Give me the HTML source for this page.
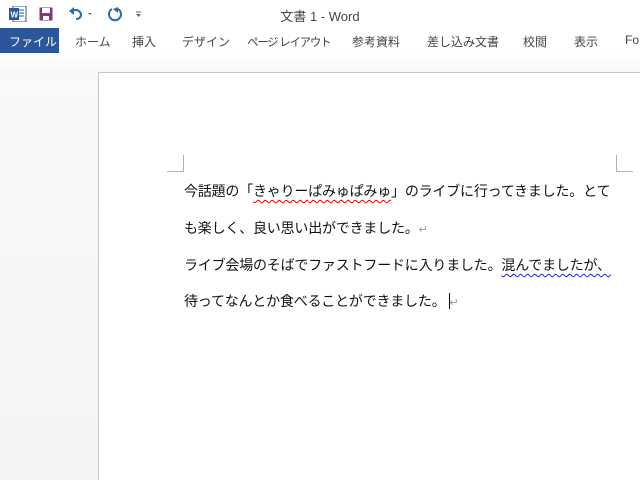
<!DOCTYPE html>
<html><head><meta charset="utf-8"><style>
*{margin:0;padding:0;box-sizing:border-box}
body{width:640px;height:480px;overflow:hidden;background:#fff;font-family:"Liberation Sans","Noto Sans CJK JP",sans-serif;position:relative}
.title{position:absolute;left:0;top:0;width:640px;height:28px;background:#fff}
.title .t{position:absolute;left:0;width:640px;top:6px;text-align:center;font-size:13px;color:#444}
.tabs{position:absolute;top:28px;left:0;width:640px;height:25px;font-size:12px;color:#444}
.tabs span{position:absolute;top:5px;white-space:nowrap}
.file{position:absolute;left:0;top:28px;width:59px;height:25px;background:#2b579a;color:#fff;font-size:12px;padding:5px 0 0 9px}
.rib{position:absolute;top:53px;left:0;width:640px;height:20px;background:linear-gradient(#fff,#f8f8f8)}
.bg{position:absolute;top:73px;left:0;width:98px;height:407px;background:linear-gradient(#f9f9f9,#f4f4f4)}
.page{position:absolute;left:98px;top:72px;width:542px;height:408px;background:#fff;border-left:1px solid #c6c6c6;border-top:1px solid #c6c6c6}
.c{position:absolute;background:#b0b0b0}
.txt{position:absolute;left:184px;font-size:14px;color:#111;letter-spacing:-0.2px;white-space:nowrap}
.r{text-decoration:underline wavy #e00;text-underline-offset:3px;text-decoration-thickness:1px}
.b{text-decoration:underline wavy #22c;text-underline-offset:3px;text-decoration-thickness:1px}
.m{color:#999;font-size:11px}
</style></head><body>
<div class="title">
<svg style="position:absolute;left:9px;top:6px" width="18" height="16"><rect x="4" y="0" width="13" height="16" fill="#fff" stroke="#2b579a"/><line x1="10" y1="4" x2="15" y2="4" stroke="#2b579a"/><line x1="10" y1="7" x2="15" y2="7" stroke="#2b579a"/><line x1="10" y1="10" x2="15" y2="10" stroke="#2b579a"/><rect x="0" y="2" width="10" height="12" fill="#2b579a"/><text x="1.5" y="11.5" font-size="8" fill="#fff" font-family="Liberation Sans" font-weight="bold">W</text></svg>
<svg style="position:absolute;left:39px;top:7px" width="14" height="14"><rect x="0.5" y="0.5" width="13" height="13" fill="#80397b"/><rect x="3" y="1" width="8" height="5" fill="#fff"/><rect x="4" y="9" width="6" height="4" fill="#fff"/></svg>
<svg style="position:absolute;left:68px;top:6px" width="28" height="16"><path d="M3 5 Q11 2 13 8 Q13 13 8 13" stroke="#2b6ca3" stroke-width="2" fill="none"/><path d="M1 5 L6 1 L6 9Z" fill="#2b6ca3"/><path d="M20 7 L24 7 L22 9Z" fill="#666"/></svg>
<svg style="position:absolute;left:107px;top:6px" width="16" height="16"><path d="M5 3 A6 6 0 1 0 11 3" stroke="#2b6ca3" stroke-width="2" fill="none"/><path d="M11 1 L11 7 L6 3Z" fill="#2b6ca3"/></svg>
<svg style="position:absolute;left:135px;top:10px" width="8" height="8"><line x1="1" y1="2" x2="6" y2="2" stroke="#666"/><path d="M1 4 L6 4 L3.5 7Z" fill="#666"/></svg>
<div class="t">文書 1 - Word</div>
</div>
<div class="file">ファイル</div>
<div class="tabs">
<span style="left:75px">ホーム</span><span style="left:132px">挿入</span><span style="left:182px">デザイン</span><span style="left:247px;letter-spacing:-1.3px;font-size:11.5px;top:6px">ページ レイアウト</span><span style="left:352px">参考資料</span><span style="left:427px">差し込み文書</span><span style="left:523px">校閲</span><span style="left:574px">表示</span><span style="left:625px">Fo</span>
</div>
<div class="rib"></div>
<div class="bg"></div>
<div class="page"></div>
<div class="c" style="left:183px;top:155px;width:1px;height:17px"></div>
<div class="c" style="left:167px;top:171px;width:17px;height:1px"></div>
<div class="c" style="left:616px;top:155px;width:1px;height:17px"></div>
<div class="c" style="left:616px;top:171px;width:17px;height:1px"></div>
<div class="txt" style="top:181px">今話題の「<span class="r">きゃりー</span><span class="r">ぱみゅぱみゅ</span>」のライブに行ってきました。とて</div>
<div class="txt" style="top:218px">も楽しく、良い思い出ができました。<span class="m">↵</span></div>
<div class="txt" style="top:255px">ライブ会場のそばでファストフードに入りました。<span class="b">混んでましたが、</span></div>
<div class="txt" style="top:291px">待ってなんとか食べることができました。<span style="border-left:1px solid #000;margin-left:3px"></span><span class="m">↵</span></div>
</body></html>
